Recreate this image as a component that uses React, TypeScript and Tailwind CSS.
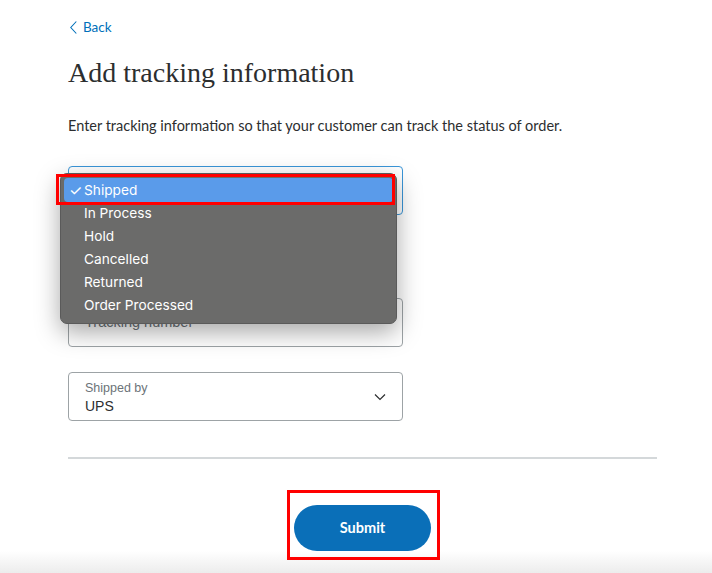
const statuses = ['Shipped', 'In Process', 'Hold', 'Cancelled', 'Returned', 'Order Processed'];

function StatusMenu() {
  return (
    <div className="absolute left-[60px] top-[173px] w-[337px] rounded-[7px] border border-[#5a5a5a] bg-[#6b6b6a] pb-[6px] pt-[4px] shadow-[0_8px_24px_rgba(0,0,0,0.35)] font-['Inter',sans-serif] text-[13.7px] text-white">
      {statuses.map((s, i) => (
        <div
          key={s}
          className={
            i === 0
              ? 'mx-[3px] flex h-[24px] items-center rounded-[4px] bg-[#5a9bea]'
              : 'mx-[3px] flex h-[23px] items-center'
          }
        >
          <span className="w-[20px] pl-[5px] text-[15px] leading-none">{i === 0 ? '✓' : ''}</span>
          <span>{s}</span>
        </div>
      ))}
    </div>
  );
}

export default function App() {
  return (
    <div className="relative h-[573px] w-[712px] overflow-hidden bg-white font-['Lato',sans-serif] text-[#2c2e2f]">
      <div className="w-[657px] pl-[68px] pt-[19px]">
        <a className="flex h-4 items-center gap-[6px] pl-[2px] text-[13.5px] text-[#0070ba]">
          <svg width="7" height="13" viewBox="0 0 7 13" fill="none" stroke="#0070ba" strokeWidth="1.1">
            <path d="M6.3 0.5L0.8 6.5l5.5 6" />
          </svg>
          <span>Back</span>
        </a>

        <h1 className="mt-[22px] font-['Liberation_Serif',serif] text-[28px] leading-8 text-[#2c2e2f]">
          Add tracking information
        </h1>

        <p className="mt-[27px] text-[14.5px] leading-5">
          Enter tracking information so that your customer can track the status of order.
        </p>

        <div className="mt-[30px] h-[49px] w-[335px] rounded-[4px] border border-[#3a96d9]" />

        <div className="mt-[83px] flex h-[49px] w-[335px] items-center rounded-[4px] border border-[#9da3a6] px-4 font-['Liberation_Sans',sans-serif] text-[14.5px] text-[#6c7378]">
          Tracking number
        </div>

        <div className="mt-[25px] flex h-[49px] w-[335px] items-center justify-between rounded-[4px] border border-[#9da3a6] pl-4 pr-[16px] font-['Liberation_Sans',sans-serif]">
          <div className="flex flex-col">
            <span className="text-[12.5px] leading-4 text-[#6c7378]">Shipped by</span>
            <span className="mt-[2px] text-[14px] leading-4 text-[#2c2e2f]">UPS</span>
          </div>
          <svg width="12" height="8" viewBox="0 0 12 8" fill="none" stroke="#2c2e2f" strokeWidth="1.2">
            <path d="M1 1.5l5 5 5-5" />
          </svg>
        </div>

        <div className="mt-[36px] h-[2px] w-[589px] bg-[#d4d8da]" />

        <div className="flex w-[589px] justify-center pt-[46px]">
          <button className="h-[46px] w-[137px] rounded-full bg-[#0a6fb8] text-[14.5px] font-bold text-white">
            Submit
          </button>
        </div>
      </div>

      <div className="absolute bottom-0 left-0 h-[22px] w-full bg-gradient-to-b from-white to-[#ececec]" />

      <StatusMenu />

      <div className="absolute left-[56px] top-[174px] h-[31px] w-[339px] border-[3px] border-[#ff0000]" />
      <div className="absolute left-[287px] top-[490px] h-[70px] w-[153px] border-[3px] border-[#ff0000]" />
    </div>
  );
}
